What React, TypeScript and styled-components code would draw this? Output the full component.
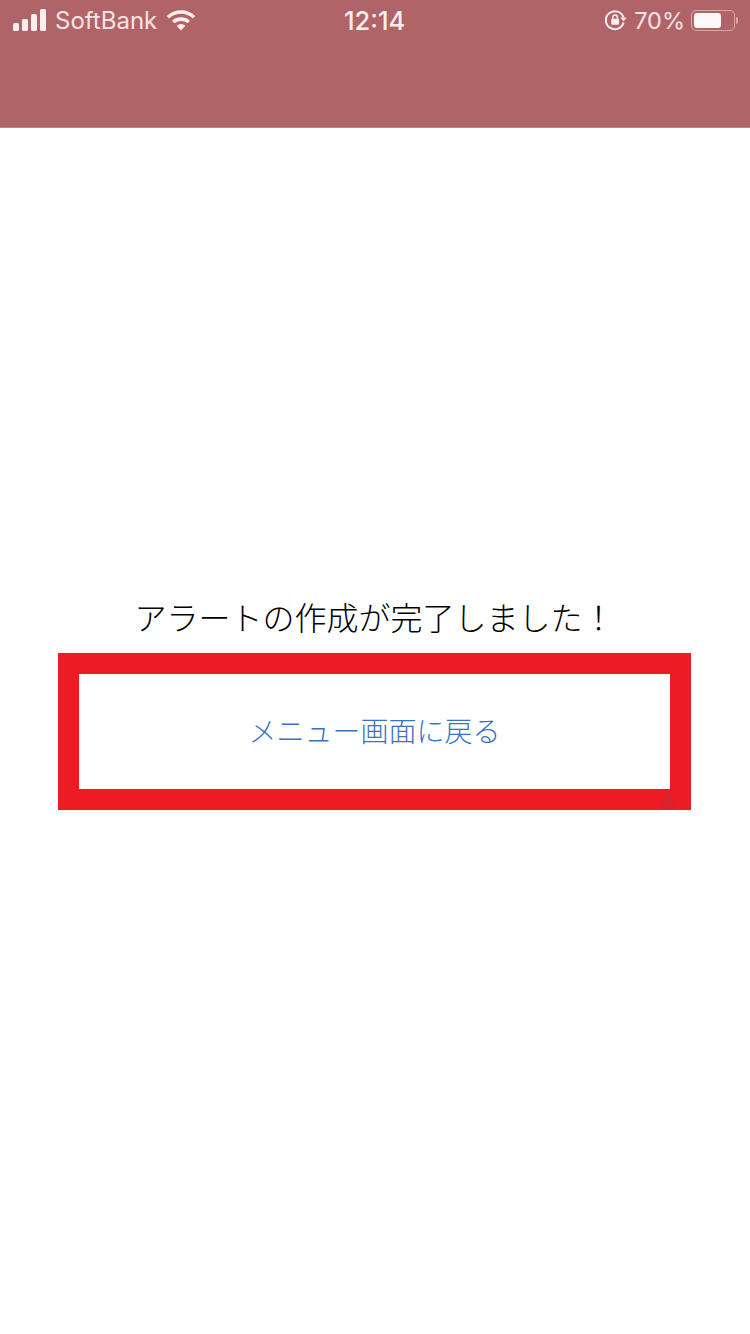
import styled, { createGlobalStyle } from 'styled-components';

const GlobalStyle = createGlobalStyle`
  html, body {
    margin: 0;
    padding: 0;
    background: #fff;
  }
  body {
    font-family: "Noto Sans CJK JP", "Noto Sans", sans-serif;
  }
`;

const App = () => {
  return (
    <Page>
      <GlobalStyle />
      <Header>
        <StatusBar>
          <StatusSide>
            <Signal viewBox="0 0 34 22">
              <rect x="0" y="14" width="6" height="8" rx="1.5" />
              <rect x="9" y="10" width="6" height="12" rx="1.5" />
              <rect x="18" y="5" width="6" height="17" rx="1.5" />
              <rect x="27" y="0" width="6" height="22" rx="1.5" />
            </Signal>
            <Carrier>SoftBank</Carrier>
            <Wifi viewBox="0 0 30 22">
              <path d="M2 8.2 A19 19 0 0 1 28 8.2" />
              <path d="M7.2 13 A12 12 0 0 1 22.8 13" />
              <path className="dot" d="M15 21.5 L10.6 16.8 A6.4 6.4 0 0 1 19.4 16.8 Z" />
            </Wifi>
          </StatusSide>
          <Clock>12:14</Clock>
          <StatusRight>
            <RotationLock viewBox="0 0 24 24">
              <path d="M20.5 9.5 A9 9 0 1 0 20.6 14.6" />
              <path className="fill" d="M23.6 9.6 L17.4 9.6 L20.5 13.4 Z" />
              <path d="M9.8 11 V9.4 A2.3 2.3 0 0 1 14.4 9.4 V11" strokeWidth="1.5" />
              <rect className="fill" x="8.2" y="10.8" width="7.8" height="6" rx="1" />
            </RotationLock>
            <Percent>70%</Percent>
            <Battery>
              <BatteryBody>
                <BatteryLevel $level={70} />
              </BatteryBody>
              <BatteryCap />
            </Battery>
          </StatusRight>
        </StatusBar>
      </Header>
      <Main>
        <Message>アラートの作成が完了しました！</Message>
        <BackButton>
          <ButtonLabel>メニュー画面に戻る</ButtonLabel>
          <CornerMark />
        </BackButton>
      </Main>
    </Page>
  );
};

export default App;

const Page = styled.div`
  width: 750px;
  height: 1334px;
  overflow: hidden;
  background: #fff;
`;

const Header = styled.header`
  height: 128px;
  box-sizing: border-box;
  background: #b16467;
  border-bottom: 1px solid #b5898b;
`;

const StatusBar = styled.div`
  position: relative;
  height: 40px;
  padding: 0 12px 0 13px;
  display: flex;
  align-items: center;
  justify-content: space-between;
  color: #fbeeee;
  font-family: "Liberation Sans", Arial, sans-serif;
  font-size: 24px;
`;

const StatusSide = styled.div`
  display: flex;
  align-items: center;
`;

const StatusRight = styled(StatusSide)``;

const Signal = styled.svg`
  width: 34px;
  height: 22px;
  fill: #fbeeee;
  margin-right: 8px;
`;

const Carrier = styled.span`
  font-family: Inter, "Liberation Sans", sans-serif;
  font-size: 24px;
  color: #f5e3e3;
`;

const Wifi = styled.svg`
  width: 30px;
  height: 22px;
  margin: 0 0 1px 9px;
  fill: none;
  stroke: #fbeeee;
  stroke-width: 3.6;
  .dot {
    fill: #fbeeee;
    stroke: none;
  }
`;

const Clock = styled.span`
  position: absolute;
  left: 344px;
  top: 7px;
  font-family: Inter, "Liberation Sans", sans-serif;
  font-size: 25.5px;
  font-weight: 500;
  line-height: 28px;
`;

const RotationLock = styled.svg`
  width: 24px;
  height: 24px;
  margin-right: 7px;
  fill: none;
  stroke: #fbeeee;
  stroke-width: 2;
  .fill {
    fill: #fbeeee;
    stroke: none;
  }
`;

const Percent = styled.span`
  font-family: Inter, "Liberation Sans", sans-serif;
  font-size: 23.5px;
  color: #f5e3e3;
  margin-right: 6px;
`;

const Battery = styled.div`
  display: flex;
  align-items: center;
  gap: 1px;
`;

const BatteryBody = styled.div`
  width: 44px;
  height: 21px;
  box-sizing: border-box;
  padding: 2px;
  border: 1.5px solid #d9a5a7;
  border-radius: 5px;
`;

const BatteryLevel = styled.div<{ $level: number }>`
  width: ${({ $level }) => $level}%;
  height: 100%;
  background: #fdf8f8;
  border-radius: 3px;
`;

const BatteryCap = styled.div`
  width: 2px;
  height: 7px;
  background: #d9a5a7;
  border-radius: 0 2px 2px 0;
`;

const Main = styled.main`
  display: flex;
  flex-direction: column;
  align-items: flex-start;
  padding: 464px 0 0 58px;
`;

const Message = styled.div`
  width: 633px;
  height: 61px;
  line-height: 48px;
  text-align: center;
  font-size: 32px;
  font-weight: 300;
  color: #000;
`;

const BackButton = styled.div`
  position: relative;
  width: 633px;
  height: 157px;
  box-sizing: border-box;
  border: 21px solid #ed1c24;
  display: flex;
  align-items: center;
  justify-content: center;
  font-size: 28px;
  font-weight: 300;
  color: #3a72c4;
`;

const ButtonLabel = styled.span`
  margin-bottom: 3px;
`;

const CornerMark = styled.div`
  position: absolute;
  right: -8px;
  bottom: -21px;
  width: 20px;
  height: 20px;
  background: #d92230;
  clip-path: polygon(50% 0, 100% 100%, 0 100%);
`;
